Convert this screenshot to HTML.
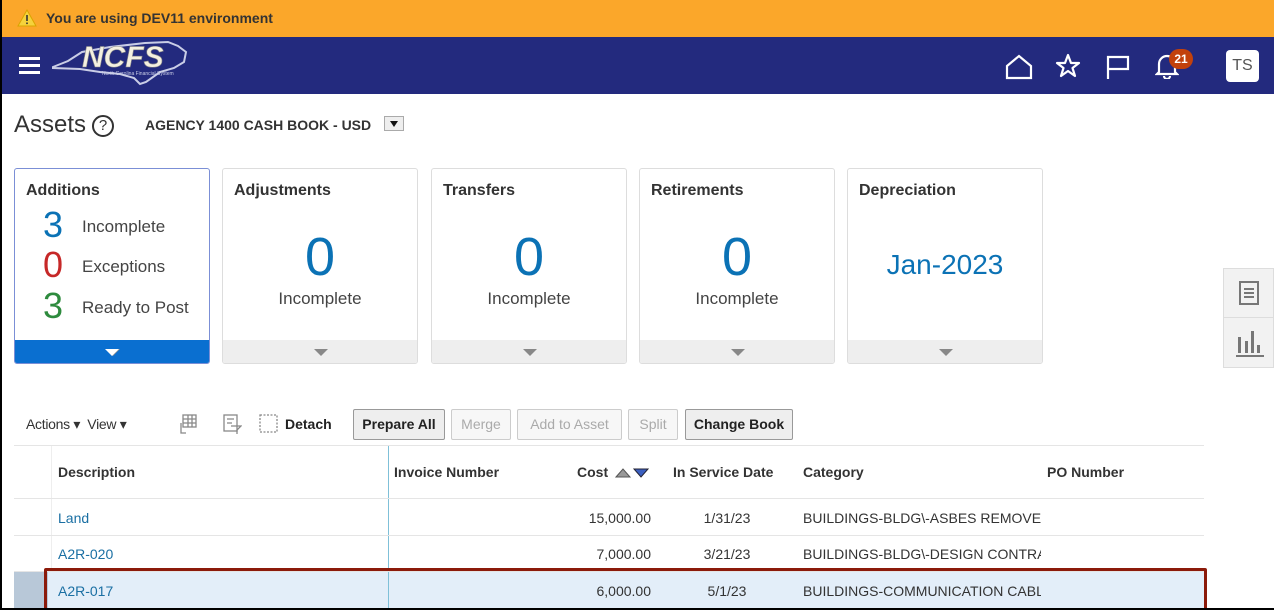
<!DOCTYPE html>
<html><head><meta charset="utf-8"><style>
*{box-sizing:border-box;margin:0;padding:0}
body{width:1274px;height:610px;overflow:hidden;background:#000;font-family:"Liberation Sans",sans-serif;position:relative}
.pg{position:absolute;left:2px;top:0;width:1272px;height:608px;background:#fff;overflow:hidden}
.a{position:absolute}
.warn{left:0;top:0;width:1272px;height:37px;background:#fba72a;}
.nav{left:0;top:37px;width:1272px;height:57px;background:#232a7e}
.card{position:absolute;top:168px;width:196px;height:196px;border:1px solid #ddd;border-radius:3px;background:#fff;overflow:hidden}
.card h3{position:absolute;left:11px;top:13px;font-size:16px;color:#333}
.card .ft{position:absolute;left:0;bottom:0;width:100%;height:23px;background:#eee}
.card .ft:after{content:"";position:absolute;left:91px;top:9px;border-left:7px solid transparent;border-right:7px solid transparent;border-top:7px solid #888}
.big{position:absolute;width:100%;text-align:center;top:57px;font-size:54px;color:#0b72b5}
.sub{position:absolute;width:100%;text-align:center;top:120px;font-size:17px;color:#444}
.btn{position:absolute;top:409px;height:31px;border:1px solid #ccc;border-radius:2px;font-size:14px;line-height:29px;text-align:center;color:#aaa;background:#f7f7f7}
.btn.on{color:#222;font-weight:bold;border-color:#999;background:#eee}
.th{position:absolute;top:464px;font-size:14px;font-weight:bold;color:#333}
.td{position:absolute;font-size:14px;color:#333}
.lnk{color:#1a6fa3}
.hl{position:absolute;left:12px;height:1px;background:#e5e5e5;width:1190px}
</style></head><body><div class="pg">
<div class="a warn">
<svg class="a" style="left:15px;top:9px" width="20" height="18" viewBox="0 0 20 18"><path d="M10 1L19 17H1Z" fill="#f5d23c" stroke="#d9a400"/><rect x="9.2" y="6" width="1.6" height="6" fill="#333"/><rect x="9.2" y="13.5" width="1.6" height="1.6" fill="#333"/></svg>
<div class="a" style="left:44px;top:10px;font-size:14px;font-weight:bold;color:#333">You are using DEV11 environment</div></div>
<div class="a nav">
<div class="a" style="left:17px;top:20px;width:21px;height:3px;background:#fff;box-shadow:0 7px #fff,0 14px #fff"></div>
<svg class="a" style="left:48px;top:1px" width="140" height="56" viewBox="0 0 140 56"><path d="M3 29 L18 23 L32 14 L60 9 L95 5 L118 4 L128 8 L136 14 L134 24 L124 30 L110 34 L96 44 L90 46 L84 40 L70 36 L50 34 L30 31 L3 30 Z" fill="none" stroke="#c9cde6" stroke-width="2"/>
<text x="32" y="29" font-family="Liberation Sans" font-weight="bold" font-style="italic" font-size="30" fill="#f4f0e0" stroke="#888" stroke-width=".6">NCFS</text>
<text x="52" y="37" font-family="Liberation Sans" font-size="5" fill="#c9cde6">North Carolina Financial System</text></svg>
<svg class="a" style="left:1003px;top:17px" width="28" height="26" viewBox="0 0 28 26" fill="none" stroke="#fff" stroke-width="2.2"><path d="M2 12L14 2L26 12V24H2Z"/></svg>
<svg class="a" style="left:1053px;top:16px" width="26" height="26" viewBox="0 0 26 26" fill="none" stroke="#fff" stroke-width="2.2" stroke-linejoin="round"><path d="M13 2L16 10H24L17.5 15L20 23L13 18L6 23L8.5 15L2 10H10Z"/></svg>
<svg class="a" style="left:1103px;top:17px" width="26" height="26" viewBox="0 0 26 26" fill="none" stroke="#fff" stroke-width="2.2"><path d="M3 25V3H23V15H3"/></svg>
<svg class="a" style="left:1153px;top:16px" width="24" height="26" viewBox="0 0 24 26" fill="none" stroke="#fff" stroke-width="2.2"><path d="M4 19V11A8 8 0 0 1 20 11V19L22 21H2Z"/><path d="M9 23A3 3 0 0 0 15 23"/></svg>
<div class="a" style="left:1167px;top:12px;width:24px;height:20px;border-radius:10px;background:#c2410c;color:#fff;font-size:12px;font-weight:bold;text-align:center;line-height:20px">21</div>
<div class="a" style="left:1224px;top:13px;width:33px;height:32px;border-radius:4px;background:#fff;color:#555;font-size:16px;text-align:center;line-height:32px">TS</div>
</div>
<div class="a" style="left:12px;top:111px;font-size:24px;color:#333">Assets</div>
<div class="a" style="left:90px;top:115px;width:22px;height:22px;border:2px solid #333;border-radius:50%;font-size:15px;text-align:center;line-height:18px;color:#333">?</div>
<div class="a" style="left:143px;top:117px;font-size:14px;font-weight:bold;color:#333">AGENCY 1400 CASH BOOK - USD</div>
<div class="a" style="left:382px;top:116px;width:20px;height:15px;border:1px solid #aaa;background:#eee"><div class="a" style="left:5px;top:4px;border-left:4px solid transparent;border-right:4px solid transparent;border-top:6px solid #111"></div></div>

<div class="card" style="left:12px;border-color:#7b8fd6"><h3>Additions</h3>
<div class="a" style="left:28px;top:35px;font-size:36px;color:#0b72b5">3</div><div class="a" style="left:67px;top:48px;font-size:17px;color:#444">Incomplete</div>
<div class="a" style="left:28px;top:75px;font-size:36px;color:#c62828">0</div><div class="a" style="left:67px;top:88px;font-size:17px;color:#444">Exceptions</div>
<div class="a" style="left:28px;top:116px;font-size:36px;color:#2e8b3e">3</div><div class="a" style="left:67px;top:129px;font-size:17px;color:#444">Ready to Post</div>
<div class="ft" style="background:#0a6fd0"></div><div class="a" style="left:90px;bottom:7px;border-left:7px solid transparent;border-right:7px solid transparent;border-top:7px solid #fff"></div></div>
<div class="card" style="left:220px"><h3>Adjustments</h3><div class="big">0</div><div class="sub">Incomplete</div><div class="ft"></div></div>
<div class="card" style="left:429px"><h3>Transfers</h3><div class="big">0</div><div class="sub">Incomplete</div><div class="ft"></div></div>
<div class="card" style="left:637px"><h3>Retirements</h3><div class="big">0</div><div class="sub">Incomplete</div><div class="ft"></div></div>
<div class="card" style="left:845px"><h3>Depreciation</h3><div class="big" style="top:80px;font-size:28px">Jan-2023</div><div class="ft"></div></div>

<div class="a" style="left:1221px;top:268px;width:51px;height:100px;background:#f2f2f2;border:1px solid #ddd">
<svg class="a" style="left:14px;top:11px" width="22" height="26" viewBox="0 0 22 26" fill="none" stroke="#777" stroke-width="2"><rect x="2" y="2" width="18" height="22"/><path d="M6 9H16M6 13H16M6 17H16"/></svg>
<div class="a" style="left:0;top:48px;width:51px;height:1px;background:#ddd"></div>
<svg class="a" style="left:12px;top:58px" width="28" height="30" viewBox="0 0 28 30" fill="#777"><rect x="2" y="10" width="3" height="16"/><rect x="9" y="14" width="3" height="12"/><rect x="15" y="4" width="3" height="22"/><rect x="21" y="18" width="3" height="8"/><rect x="0" y="28" width="28" height="2"/></svg></div>

<div class="a" style="left:24px;top:416px;font-size:14px;color:#333;letter-spacing:-0.3px">Actions ▾ &nbsp;View ▾</div>
<svg class="a" style="left:176px;top:413px" width="20" height="22" viewBox="0 0 20 22" fill="none" stroke="#888" stroke-width="1.3"><rect x="5" y="2" width="13" height="12"/><path d="M5 6H18M5 10H18M10 2V14M14 2V14M3 10V20H8"/></svg>
<svg class="a" style="left:220px;top:413px" width="20" height="22" viewBox="0 0 20 22" fill="none" stroke="#888" stroke-width="1.3"><rect x="2" y="2" width="13" height="16"/><path d="M5 6H12M5 10H10M9 13H19L15 17V21"/></svg>
<svg class="a" style="left:257px;top:414px" width="20" height="20" viewBox="0 0 20 20" fill="none" stroke="#888" stroke-width="1.3" stroke-dasharray="2 1.5"><rect x="1" y="1" width="17" height="17"/></svg>
<div class="a" style="left:283px;top:416px;font-size:14px;font-weight:bold;color:#222">Detach</div>
<div class="btn on" style="left:351px;width:92px">Prepare All</div>
<div class="btn" style="left:449px;width:60px">Merge</div>
<div class="btn" style="left:515px;width:105px">Add to Asset</div>
<div class="btn" style="left:626px;width:50px">Split</div>
<div class="btn on" style="left:683px;width:108px">Change Book</div>

<div class="hl" style="top:445px"></div>
<div class="a" style="left:49px;top:446px;width:1px;height:126px;background:#eee"></div>
<div class="a" style="left:386px;top:446px;width:1px;height:162px;background:#7fc0d8"></div>
<div class="th" style="left:56px">Description</div>
<div class="th" style="left:392px">Invoice Number</div>
<div class="th" style="left:575px">Cost</div>
<svg class="a" style="left:613px;top:466px" width="36" height="12" viewBox="0 0 36 12"><path d="M1 11L8 3L15 11Z" fill="#999" stroke="#555"/><path d="M19 3H33L26 11Z" fill="#3b5fc0" stroke="#223"/></svg>
<div class="th" style="left:671px">In Service Date</div>
<div class="th" style="left:801px">Category</div>
<div class="th" style="left:1045px">PO Number</div>
<div class="hl" style="top:498px"></div>
<div class="hl" style="top:535px"></div>
<div class="hl" style="top:571px"></div>
<div class="td lnk" style="left:56px;top:510px">Land</div><div class="td" style="left:520px;width:129px;text-align:right;top:510px">15,000.00</div><div class="td" style="left:671px;width:108px;text-align:center;top:510px">1/31/23</div><div class="td" style="left:801px;top:510px;width:238px;overflow:hidden;white-space:nowrap">BUILDINGS-BLDG\-ASBES REMOVE</div>
<div class="td lnk" style="left:56px;top:546px">A2R-020</div><div class="td" style="left:520px;width:129px;text-align:right;top:546px">7,000.00</div><div class="td" style="left:671px;width:108px;text-align:center;top:546px">3/21/23</div><div class="td" style="left:801px;top:546px;width:238px;overflow:hidden;white-space:nowrap">BUILDINGS-BLDG\-DESIGN CONTRACT</div>
<div class="a" style="left:12px;top:572px;width:34px;height:36px;background:#b8c8d8"></div>
<div class="a" style="left:46px;top:572px;width:1156px;height:36px;background:#e3eef9"></div>
<div class="a" style="left:386px;top:572px;width:1px;height:36px;background:#7fc0d8"></div>
<div class="td lnk" style="left:56px;top:583px">A2R-017</div><div class="td" style="left:520px;width:129px;text-align:right;top:583px">6,000.00</div><div class="td" style="left:671px;width:108px;text-align:center;top:583px">5/1/23</div><div class="td" style="left:801px;top:583px;width:238px;overflow:hidden;white-space:nowrap">BUILDINGS-COMMUNICATION CABLE</div>
<div class="a" style="left:42px;top:568px;width:1163px;height:44px;border:3px solid #8b1a0a;border-radius:2px"></div>
</div></body></html>
